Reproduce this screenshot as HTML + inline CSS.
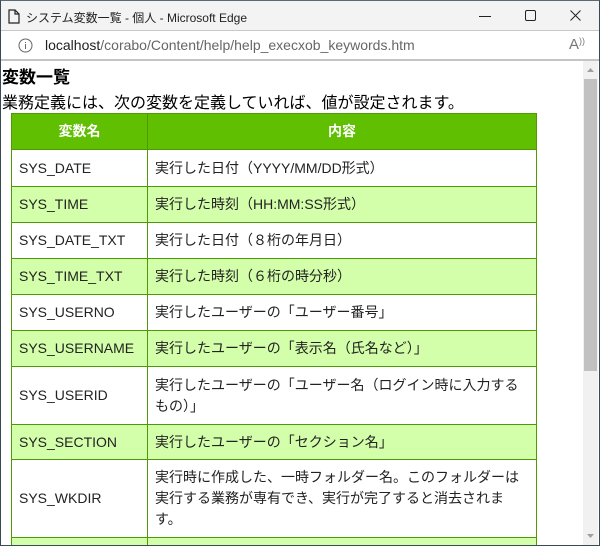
<!DOCTYPE html>
<html><head><meta charset="utf-8"><style>
*{margin:0;padding:0;box-sizing:border-box}
html,body{width:600px;height:546px;overflow:hidden}
body{background:#fff;font-family:"Liberation Sans","Noto Sans CJK JP",sans-serif;position:relative}
.win{position:absolute;inset:0;border:1px solid #3a4a55;border-top-color:#5a6a75}
.title{position:absolute;left:1px;right:1px;top:1px;height:30px;background:#f3f3f3;border-bottom:1px solid #c8c8c8;font-size:12px;color:#222}
.title span{position:absolute;left:25px;top:8px}
.addr{position:absolute;left:1px;right:1px;top:31px;height:30px;background:#fff;border-bottom:2px solid #c4c4c4;font-size:14px;color:#666}
.addr .u{position:absolute;left:44px;top:6px}
.content{position:absolute;left:1px;top:61px;width:582px;height:484px;overflow:hidden}
h1{font-size:17px;font-weight:bold;position:absolute;left:1px;top:2px;color:#000}
p{font-size:16px;position:absolute;left:1px;top:28px;color:#000}
table{position:absolute;left:10px;top:52px;width:526px;border-collapse:collapse;font-size:14px;color:#222}
td,th{border:1px solid #4e9a06;padding:0 7px;vertical-align:middle;line-height:21px}
th{background:#5fbf00;color:#fff;height:36px;font-weight:bold;text-align:center}
td:first-child{width:136px}
tr.g td{background:#d4ffaa}
.sb{position:absolute;left:583px;top:61px;width:15px;height:484px;background:#f1f1f1}
.thumb{position:absolute;left:1px;top:18px;width:13px;height:292px;background:#c1c1c1}
</style></head><body>
<div class="win"></div>
<div class="title">
<svg style="position:absolute;left:7px;top:8px" width="12" height="15" viewBox="0 0 12 15"><path d="M1 1h6l4 4v9H1z M7 1v4h4" fill="none" stroke="#222" stroke-width="1.2"/></svg>
<span>システム変数一覧 - 個人 - Microsoft Edge</span>
<svg style="position:absolute;left:478px;top:15px" width="12" height="2"><rect width="12" height="1" fill="#222"/></svg>
<svg style="position:absolute;left:524px;top:9px" width="12" height="12"><rect x="0.5" y="0.5" width="10" height="10" rx="1.5" fill="none" stroke="#222"/></svg>
<svg style="position:absolute;left:569px;top:9px" width="12" height="12"><path d="M0.5 0.5L10.5 10.5M10.5 0.5L0.5 10.5" stroke="#222"/></svg>
</div>
<div class="addr">
<svg style="position:absolute;left:17px;top:7px" width="15" height="15"><circle cx="7.5" cy="7.5" r="6.5" fill="none" stroke="#666"/><rect x="7" y="6" width="1" height="5" fill="#666"/><rect x="7" y="4" width="1" height="1" fill="#666"/></svg>
<span class="u"><span style="color:#222">localhost</span>/corabo/Content/help/help_execxob_keywords.htm</span>
<span style="position:absolute;left:568px;top:5px;font-size:15px;color:#777">A<span style="font-size:9px;vertical-align:top">))</span></span>
</div>
<div class="content">
<h1>変数一覧</h1>
<p>業務定義には、次の変数を定義していれば、値が設定されます。</p>
<table>
<tr><th>変数名</th><th>内容</th></tr>
<tr style="height:37px"><td>SYS_DATE</td><td>実行した日付（YYYY/MM/DD形式）</td></tr>
<tr class="g" style="height:36px"><td>SYS_TIME</td><td>実行した時刻（HH:MM:SS形式）</td></tr>
<tr style="height:36px"><td>SYS_DATE_TXT</td><td>実行した日付（８桁の年月日）</td></tr>
<tr class="g" style="height:36px"><td>SYS_TIME_TXT</td><td>実行した時刻（６桁の時分秒）</td></tr>
<tr style="height:36px"><td>SYS_USERNO</td><td>実行したユーザーの「ユーザー番号」</td></tr>
<tr class="g" style="height:36px"><td>SYS_USERNAME</td><td>実行したユーザーの「表示名（氏名など）」</td></tr>
<tr style="height:58px"><td>SYS_USERID</td><td>実行したユーザーの「ユーザー名（ログイン時に入力するもの）」</td></tr>
<tr class="g" style="height:35px"><td>SYS_SECTION</td><td>実行したユーザーの「セクション名」</td></tr>
<tr style="height:78px"><td>SYS_WKDIR</td><td>実行時に作成した、一時フォルダー名。このフォルダーは実行する業務が専有でき、実行が完了すると消去されます。</td></tr>
<tr class="g" style="height:36px"><td>&nbsp;</td><td>&nbsp;</td></tr>
</table>
</div>
<div class="sb"><div class="thumb"></div>
<svg style="position:absolute;left:4px;top:7px" width="7" height="4"><path d="M0 4L3.5 0L7 4z" fill="#a0a0a0"/></svg>
<svg style="position:absolute;left:4px;top:473px" width="7" height="4"><path d="M0 0L3.5 4L7 0z" fill="#a0a0a0"/></svg>
</div>
</body></html>
